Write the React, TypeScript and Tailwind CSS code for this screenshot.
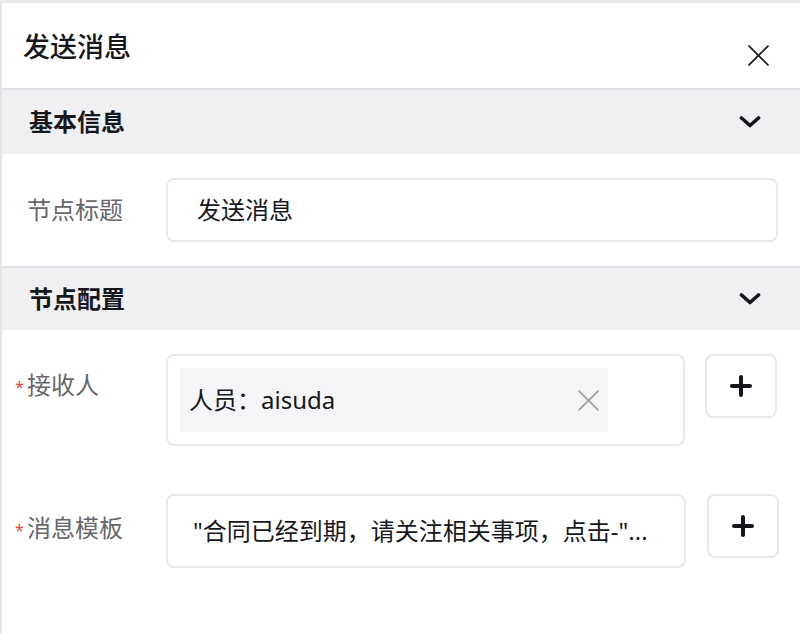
import React from "react";

const font = { fontFamily: '"Noto Sans", "Noto Sans CJK SC", sans-serif' };

function Chevron() {
  return (
    <svg width="22" height="14" viewBox="0 0 22 14" fill="none">
      <polyline points="2.5,3 11,10.5 19.5,3" stroke="#14161a" strokeWidth="3.6" strokeLinecap="round" strokeLinejoin="round" />
    </svg>
  );
}

function Plus() {
  return (
    <svg width="22" height="22" viewBox="0 0 22 22" fill="none">
      <line x1="11" y1="2" x2="11" y2="20" stroke="#14161a" strokeWidth="4" strokeLinecap="round" />
      <line x1="2" y1="11" x2="20" y2="11" stroke="#14161a" strokeWidth="4" strokeLinecap="round" />
    </svg>
  );
}

function X({ size, color, w }: { size: number; color: string; w: number }) {
  return (
    <svg width={size} height={size} viewBox="0 0 20 20" fill="none">
      <line x1="1" y1="1" x2="19" y2="19" stroke={color} strokeWidth={w} strokeLinecap="round" />
      <line x1="19" y1="1" x2="1" y2="19" stroke={color} strokeWidth={w} strokeLinecap="round" />
    </svg>
  );
}

function SectionHeader({ title, h }: { title: string; h: string }) {
  return (
    <div className={`flex ${h} items-center justify-between border-t-2 border-[#e3e3e7] bg-[#f0f0f3] pl-[27px] pr-[39px]`}>
      <span className="text-[24px] font-bold text-[#16181d]">{title}</span>
      <Chevron />
    </div>
  );
}

export default function App() {
  return (
    <div className="h-[634px] w-[800px] overflow-hidden bg-white" style={font}>
      <div className="h-[3px] bg-[#e8e8ea]" />
      <div className="flex h-[631px] flex-col border-l-2 border-[#e4e4e6]">
        <div className="flex h-[85px] items-start justify-between pl-[21px] pr-[31px]">
          <span className="mt-[25px] text-[27px] font-medium leading-[38px] text-[#16181d]">发送消息</span>
          <div className="mt-[42px]">
            <X size={21} color="#1f2329" w={1.8} />
          </div>
        </div>
        <SectionHeader title="基本信息" h="h-[66px]" />
        <div className="flex items-center pb-[24px] pt-[24px]">
          <span className="w-[164px] pl-[25px] text-[24px] text-[#65676c]">节点标题</span>
          <div className="flex h-[64px] w-[612px] items-center rounded-[8px] border-2 border-[#e8e8ea] pl-[29px] text-[24px] text-[#16181d]">
            发送消息
          </div>
        </div>
        <SectionHeader title="节点配置" h="h-[64px]" />
        <div className="flex items-start pt-[24px]">
          <div className="flex w-[164px] items-center pt-[13px] text-[24px] text-[#65676c]">
            <span className="w-[12px] pl-[13px] pt-[4px] text-[16px] text-[#f04438]">*</span>
            <span className="pl-[12px]">接收人</span>
          </div>
          <div className="h-[92px] w-[519px] rounded-[8px] border-2 border-[#e8e8ea] p-[12px]">
            <div className="flex h-[64px] w-[428px] items-center justify-between bg-[#f5f5f7] pl-[9px] pr-[9px]">
              <span className="text-[24px] text-[#16181d]">人员：aisuda</span>
              <X size={21} color="#a0a0a3" w={1.6} />
            </div>
          </div>
          <div className="ml-[20px] flex h-[64px] w-[72px] items-center justify-center rounded-[8px] border-2 border-[#e8e8ea]">
            <Plus />
          </div>
        </div>
        <div className="flex items-start pt-[48px]">
          <div className="flex w-[164px] items-center pt-[16px] text-[24px] text-[#65676c]">
            <span className="w-[12px] pl-[13px] pt-[4px] text-[16px] text-[#f04438]">*</span>
            <span className="pl-[12px]">消息模板</span>
          </div>
          <div className="flex h-[74px] w-[520px] items-center rounded-[8px] border-2 border-[#e8e8ea] pl-[25px] text-[24px] text-[#16181d]">
            <span className="whitespace-nowrap">"合同已经到期，请关注相关事项，点击-"...</span>
          </div>
          <div className="ml-[21px] flex h-[64px] w-[72px] items-center justify-center rounded-[8px] border-2 border-[#e8e8ea]">
            <Plus />
          </div>
        </div>
      </div>
    </div>
  );
}
